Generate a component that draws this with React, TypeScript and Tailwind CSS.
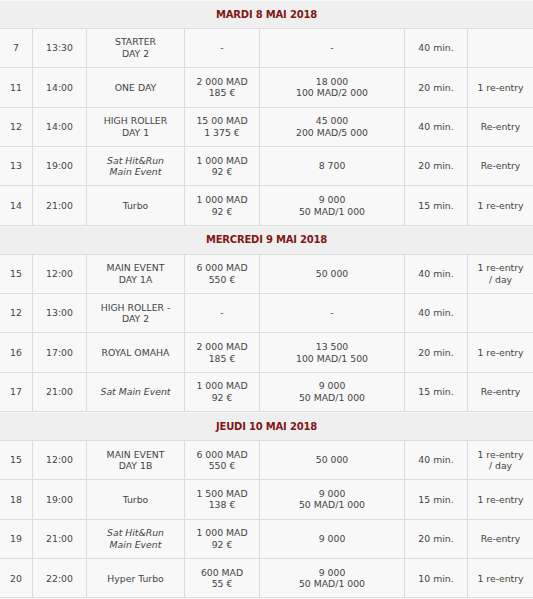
type Row = {
  n: string;
  time: string;
  name: string[];
  italic?: boolean;
  buyin: string[];
  stack: string[];
  level: string;
  entry: string[];
};

type Day = { title: string; rows: Row[] };

const days: Day[] = [
  {
    title: 'MARDI 8 MAI 2018',
    rows: [
      { n: '7', time: '13:30', name: ['STARTER', 'DAY 2'], buyin: ['-'], stack: ['-'], level: '40 min.', entry: [] },
      { n: '11', time: '14:00', name: ['ONE DAY'], buyin: ['2 000 MAD', '185 €'], stack: ['18 000', '100 MAD/2 000'], level: '20 min.', entry: ['1 re-entry'] },
      { n: '12', time: '14:00', name: ['HIGH ROLLER', 'DAY 1'], buyin: ['15 00 MAD', '1 375 €'], stack: ['45 000', '200 MAD/5 000'], level: '40 min.', entry: ['Re-entry'] },
      { n: '13', time: '19:00', name: ['Sat Hit&Run', 'Main Event'], italic: true, buyin: ['1 000 MAD', '92 €'], stack: ['8 700'], level: '20 min.', entry: ['Re-entry'] },
      { n: '14', time: '21:00', name: ['Turbo'], buyin: ['1 000 MAD', '92 €'], stack: ['9 000', '50 MAD/1 000'], level: '15 min.', entry: ['1 re-entry'] },
    ],
  },
  {
    title: 'MERCREDI 9 MAI 2018',
    rows: [
      { n: '15', time: '12:00', name: ['MAIN EVENT', 'DAY 1A'], buyin: ['6 000 MAD', '550 €'], stack: ['50 000'], level: '40 min.', entry: ['1 re-entry', '/ day'] },
      { n: '12', time: '13:00', name: ['HIGH ROLLER -', 'DAY 2'], buyin: ['-'], stack: ['-'], level: '40 min.', entry: [] },
      { n: '16', time: '17:00', name: ['ROYAL OMAHA'], buyin: ['2 000 MAD', '185 €'], stack: ['13 500', '100 MAD/1 500'], level: '20 min.', entry: ['1 re-entry'] },
      { n: '17', time: '21:00', name: ['Sat Main Event'], italic: true, buyin: ['1 000 MAD', '92 €'], stack: ['9 000', '50 MAD/1 000'], level: '15 min.', entry: ['Re-entry'] },
    ],
  },
  {
    title: 'JEUDI 10 MAI 2018',
    rows: [
      { n: '15', time: '12:00', name: ['MAIN EVENT', 'DAY 1B'], buyin: ['6 000 MAD', '550 €'], stack: ['50 000'], level: '40 min.', entry: ['1 re-entry', '/ day'] },
      { n: '18', time: '19:00', name: ['Turbo'], buyin: ['1 500 MAD', '138 €'], stack: ['9 000', '50 MAD/1 000'], level: '15 min.', entry: ['1 re-entry'] },
      { n: '19', time: '21:00', name: ['Sat Hit&Run', 'Main Event'], italic: true, buyin: ['1 000 MAD', '92 €'], stack: ['9 000'], level: '20 min.', entry: ['Re-entry'] },
      { n: '20', time: '22:00', name: ['Hyper Turbo'], buyin: ['600 MAD', '55 €'], stack: ['9 000', '50 MAD/1 000'], level: '10 min.', entry: ['1 re-entry'] },
    ],
  },
];

function Cell({ lines, italic, first }: { lines: string[]; italic?: boolean; first?: boolean }) {
  return (
    <div
      className={`flex flex-col items-center justify-center text-center ${first ? '' : 'border-l border-[#dcdcdc]'} ${italic ? 'italic' : ''}`}
    >
      {lines.map((l, i) => (
        <span key={i}>{l}</span>
      ))}
    </div>
  );
}

export default function App() {
  return (
    <div
      className="w-[533px] h-[599px] overflow-hidden bg-[#f8f8f8] text-[#444] text-[9.3px] leading-[11.5px]"
      style={{ fontFamily: '"DejaVu Sans", Verdana, sans-serif' }}
    >
      {days.map((day) => (
        <div key={day.title}>
          <div className="h-[28.8px] flex items-center justify-center bg-[#efefef] border-b border-[#dcdcdc] border-t border-t-[#f6f6f6]">
            <span className="font-bold text-[10px] tracking-[-0.2px] text-[#7f1717]">{day.title}</span>
          </div>
          {day.rows.map((r, i) => (
            <div
              key={i}
              className="grid grid-cols-[32px_54px_98px_75px_145px_63px_1fr] h-[39.4px] border-b border-[#dcdcdc] bg-[#f8f8f8]"
            >
              <Cell lines={[r.n]} first />
              <Cell lines={[r.time]} />
              <Cell lines={r.name} italic={r.italic} />
              <Cell lines={r.buyin} />
              <Cell lines={r.stack} />
              <Cell lines={[r.level]} />
              <Cell lines={r.entry} />
            </div>
          ))}
        </div>
      ))}
    </div>
  );
}
